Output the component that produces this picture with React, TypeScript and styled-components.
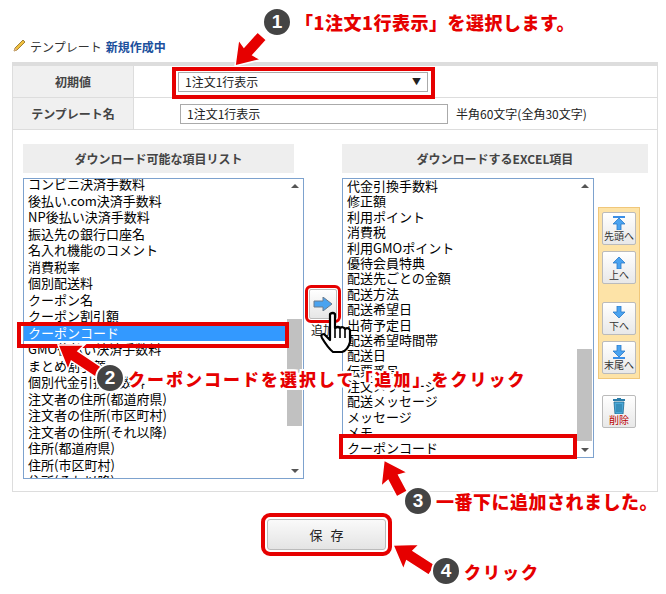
import React from 'react';
import styled, { createGlobalStyle } from 'styled-components';

const Global = createGlobalStyle`
  body { margin: 0; background: #fff; font-family: "Noto Sans CJK JP", "Noto Sans", sans-serif; }
`;

const Page = styled.div`
  position: relative;
  width: 666px;
  height: 594px;
  padding: 36px 8px 0 12px;
  box-sizing: border-box;
  color: #222;
`;

const Heading = styled.div`
  display: flex;
  align-items: center;
  gap: 4px;
  font-size: 12px;
  height: 20px;
  color: #333;
  b { color: #1a4f9c; font-weight: bold; }
`;

const Panel = styled.div`
  margin-top: 6px;
  border-top: 4px solid #ddd;
  border-left: 1px solid #ddd;
  border-right: 1px solid #ddd;
  border-bottom: 1px solid #ddd;
  width: 646px;
  box-sizing: border-box;
`;

const Row = styled.div`
  display: flex;
  height: 31px;
  border-bottom: 1px solid #ddd;
`;

const Label = styled.div`
  width: 120px;
  background: #f0f0f0;
  border-right: 1px solid #ddd;
  display: flex;
  align-items: center;
  justify-content: center;
  font-size: 12px;
  font-weight: bold;
  color: #444;
`;

const Cell = styled.div`
  display: flex;
  align-items: center;
  padding-left: 40px;
  gap: 8px;
  font-size: 12px;
`;

const SelectBox = styled.div`
  position: relative;
  width: 250px;
  height: 20px;
  border: 1px solid #aaa;
  font-size: 12px;
  display: flex;
  align-items: center;
  justify-content: space-between;
  padding: 0 6px;
  box-sizing: border-box;
  background: #fff;
`;

const InputBox = styled.div`
  width: 268px;
  height: 20px;
  margin-left: 6px;
  border: 1px solid #aaa;
  font-size: 12px;
  display: flex;
  align-items: center;
  padding: 0 6px;
  box-sizing: border-box;
`;

const ListArea = styled.div`
  display: flex;
  padding: 14px 0 12px 10px;
`;

const Column = styled.div<{ $w: number }>`
  width: ${p => p.$w}px;
  display: flex;
  flex-direction: column;
`;

const ColHead = styled.div`
  height: 29px;
  background: #eee;
  display: flex;
  align-items: center;
  justify-content: center;
  font-size: 12px;
  font-weight: bold;
  color: #444;
  margin-bottom: 5px;
`;

const ListBox = styled.div<{ $w: number; $h: number }>`
  position: relative;
  width: ${p => p.$w}px;
  height: ${p => p.$h}px;
  border: 1px solid #7da2ce;
  overflow: hidden;
  box-sizing: border-box;
  background: #fff;
`;

const Items = styled.div<{ $mt: number }>`
  margin-top: ${p => p.$mt}px;
  padding-right: 17px;
`;

const Item = styled.div<{ $sel?: boolean; $lh: number }>`
  height: ${p => p.$lh}px;
  line-height: ${p => p.$lh}px;
  font-size: 13px;
  padding-left: 4px;
  white-space: nowrap;
  background: ${p => (p.$sel ? '#3399ff' : 'transparent')};
  color: ${p => (p.$sel ? '#fff' : '#000')};
`;

const Scroll = styled.div<{ $top: number; $h: number }>`
  position: absolute;
  right: 0;
  top: 0;
  bottom: 0;
  width: 17px;
  background: #fff;
  &::after {
    content: '';
    position: absolute;
    left: 1px;
    right: 1px;
    top: ${p => p.$top}px;
    height: ${p => p.$h}px;
    background: #c1c1c1;
  }
`;

const Tri = styled.span<{ $up?: boolean }>`
  position: absolute;
  left: 5px;
  ${p => (p.$up ? 'top: 5px;' : 'bottom: 5px;')}
  width: 0;
  height: 0;
  border-left: 4px solid transparent;
  border-right: 4px solid transparent;
  ${p => (p.$up ? 'border-bottom: 4px solid #555;' : 'border-top: 4px solid #555;')}
`;

const Middle = styled.div`
  width: 38px;
  display: flex;
  flex-direction: column;
  align-items: center;
  padding-top: 145px;
  font-size: 12px;
  gap: 2px;
`;

const ArrowBtn = styled.div`
  width: 26px;
  height: 28px;
  border: 1px solid #bbb;
  border-radius: 2px;
  background: linear-gradient(#fff, #e6e6e6);
  display: flex;
  align-items: center;
  justify-content: center;
  outline: 3px solid #e60000;
  outline-offset: 1px;
`;

const RightBody = styled.div`
  display: flex;
  gap: 4px;
`;

const SideCol = styled.div`
  display: flex;
  flex-direction: column;
  align-items: center;
  padding-top: 29px;
  gap: 16px;
`;

const MoveBox = styled.div`
  width: 42px;
  background: #fde3a7;
  border: 1px solid #f0c77a;
  box-sizing: border-box;
  padding: 4px 3px;
  display: flex;
  flex-direction: column;
  gap: 6px;
`;

const SideBtn = styled.div<{ $gapTop?: number; $red?: boolean }>`
  width: 34px;
  height: 33px;
  margin-top: ${p => p.$gapTop || 0}px;
  border: 1px solid #bbb;
  border-radius: 2px;
  background: linear-gradient(#fff, #e8e8e8);
  box-sizing: border-box;
  display: flex;
  flex-direction: column;
  align-items: center;
  justify-content: center;
  font-size: 10px;
  line-height: 11px;
  color: ${p => (p.$red ? '#b00' : '#333')};
`;

const Footer = styled.div`
  display: flex;
  padding: 27px 0 0 255px;
`;

const SaveBtn = styled.div`
  width: 119px;
  height: 31px;
  border: 1px solid #bbb;
  border-radius: 3px;
  background: linear-gradient(#fafafa, #e4e4e4);
  display: flex;
  align-items: center;
  justify-content: center;
  font-size: 13px;
  letter-spacing: 8px;
  padding-left: 8px;
  box-sizing: border-box;
  outline: 4px solid #e60000;
  outline-offset: 2px;
`;

const RedFrame = styled.div<{ $x: number; $y: number; $w: number; $h: number }>`
  position: absolute;
  left: ${p => p.$x}px;
  top: ${p => p.$y}px;
  width: ${p => p.$w}px;
  height: ${p => p.$h}px;
  border: 4px solid #e60000;
  box-sizing: border-box;
  pointer-events: none;
`;

const Note = styled.div<{ $x: number; $y: number; $size?: number; $ls?: number }>`
  position: absolute;
  left: ${p => p.$x}px;
  top: ${p => p.$y}px;
  display: flex;
  align-items: center;
  gap: 3px;
  font-size: ${p => p.$size || 17}px;
  letter-spacing: ${p => p.$ls || 0}px;
  font-weight: 900;
  color: #e60000;
  white-space: nowrap;
  text-shadow: -2px 0 #fff, 2px 0 #fff, 0 -2px #fff, 0 2px #fff, 2px 2px #fff, -2px -2px #fff, 2px -2px #fff, -2px 2px #fff;
`;

const Badge = styled.span`
  width: 26px;
  height: 26px;
  border-radius: 50%;
  background: #444;
  border: 2px solid #fff;
  color: #fff;
  font-family: "Liberation Sans", sans-serif;
  font-size: 19px;
  font-weight: bold;
  letter-spacing: 0;
  display: inline-flex;
  align-items: center;
  justify-content: center;
  text-shadow: none;
  flex-shrink: 0;
`;

const Overlay = styled.svg`
  position: absolute;
  left: 0;
  top: 0;
  pointer-events: none;
`;

const leftItems = [
  'コンビニ決済手数料', '後払い.com決済手数料', 'NP後払い決済手数料', '振込先の銀行口座名',
  '名入れ機能のコメント', '消費税率', '個別配送料', 'クーポン名', 'クーポン割引額', 'クーポンコード',
  'GMO後払い決済手数料', 'まとめ割引額', '個別代金引換手数料', '注文者の住所(都道府県)',
  '注文者の住所(市区町村)', '注文者の住所(それ以降)', '住所(都道府県)', '住所(市区町村)', '住所(それ以降)',
];

const rightItems = [
  '代金引換手数料', '修正額', '利用ポイント', '消費税', '利用GMOポイント', '優待会員特典',
  '配送先ごとの金額', '配送方法', '配送希望日', '出荷予定日', '配送希望時間帯', '配送日',
  '伝票番号', '注文メッセージ', '配送メッセージ', 'メッセージ', 'メモ', 'クーポンコード',
];

const BlueArrow = ({ dir }: { dir: 'top' | 'up' | 'down' | 'bottom' }) => {
  const down = dir === 'down' || dir === 'bottom';
  const bar = dir === 'top' || dir === 'bottom';
  return (
    <svg width="16" height="14" viewBox="0 0 16 14">
      <g transform={down ? 'rotate(180 8 7)' : undefined}>
        {bar && <rect x="2" y="0" width="12" height="2" fill="#3a8ee6" />}
        <path d="M8 2 L14 8 L10 8 L10 14 L6 14 L6 8 L2 8 Z" fill="#4aa3f0" stroke="#2a78c8" strokeWidth="0.8" />
      </g>
    </svg>
  );
};

const Arrow = ({ x1, y1, x2, y2 }: { x1: number; y1: number; x2: number; y2: number }) => {
  const a = Math.atan2(y2 - y1, x2 - x1);
  const len = Math.hypot(x2 - x1, y2 - y1);
  const deg = (a * 180) / Math.PI;
  return (
    <g transform={`translate(${x1} ${y1}) rotate(${deg})`}>
      <path
        d={`M0 -6 L${len - 20} -6 L${len - 22} -15 L${len} 0 L${len - 22} 15 L${len - 20} 6 L0 6 Z`}
        fill="#e60000"
        stroke="#fff"
        strokeWidth="1.5"
      />
    </g>
  );
};

export default function App() {
  return (
    <Page>
      <Global />
      <Heading>
        <svg width="14" height="14" viewBox="0 0 14 14">
          <path d="M2 12 L3 9 L11 1 L13 3 L5 11 Z" fill="#f0c040" stroke="#8a6a20" strokeWidth="0.8" />
          <path d="M2 12 L3 9 L5 11 Z" fill="#e8b890" />
        </svg>
        テンプレート <b>新規作成中</b>
      </Heading>
      <Panel>
        <Row>
          <Label>初期値</Label>
          <Cell style={{ paddingLeft: 44 }}>
            <SelectBox>
              1注文1行表示 <span style={{ fontSize: 9 }}>▼</span>
            </SelectBox>
          </Cell>
        </Row>
        <Row>
          <Label>テンプレート名</Label>
          <Cell>
            <InputBox>1注文1行表示</InputBox>
            <span>半角60文字(全角30文字)</span>
          </Cell>
        </Row>
        <ListArea>
          <Column $w={281}>
            <ColHead style={{ width: 271 }}>ダウンロード可能な項目リスト</ColHead>
            <ListBox $w={281} $h={301}>
              <Items $mt={-3}>
                {leftItems.map(t => (
                  <Item key={t} $lh={16.5} $sel={t === 'クーポンコード'}>{t}</Item>
                ))}
              </Items>
              <Scroll $top={140} $h={107}>
                <Tri $up />
                <Tri />
              </Scroll>
            </ListBox>
          </Column>
          <Middle>
            <ArrowBtn>
              <svg width="20" height="14" viewBox="0 0 20 14">
                <path d="M1 4 L10 4 L10 0 L19 7 L10 14 L10 10 L1 10 Z" fill="#4aa3f0" stroke="#6b7b8c" strokeWidth="1" />
              </svg>
            </ArrowBtn>
            <span>追加</span>
          </Middle>
          <Column $w={306}>
            <ColHead>ダウンロードするEXCEL項目</ColHead>
            <RightBody>
              <ListBox $w={252} $h={280}>
                <Items $mt={-1}>
                  {rightItems.map(t => (
                    <Item key={t} $lh={15.4}>{t}</Item>
                  ))}
                </Items>
                <Scroll $top={170} $h={92}>
                  <Tri $up />
                  <Tri />
                </Scroll>
              </ListBox>
              <SideCol>
                <MoveBox>
                  <SideBtn><BlueArrow dir="top" />先頭へ</SideBtn>
                  <SideBtn><BlueArrow dir="up" />上へ</SideBtn>
                  <SideBtn $gapTop={12}><BlueArrow dir="down" />下へ</SideBtn>
                  <SideBtn><BlueArrow dir="bottom" />末尾へ</SideBtn>
                </MoveBox>
                <SideBtn $red>
                  <svg width="14" height="16" viewBox="0 0 14 16">
                    <rect x="1" y="1" width="12" height="2" fill="#2a7ca8" />
                    <rect x="5" y="0" width="4" height="1.5" fill="#2a7ca8" />
                    <path d="M2 4 L12 4 L11 16 L3 16 Z" fill="#4aa8d8" stroke="#1f6a90" strokeWidth="0.8" />
                    <path d="M5 6 V14 M7 6 V14 M9 6 V14" stroke="#1f6a90" strokeWidth="0.8" />
                  </svg>
                  削除
                </SideBtn>
              </SideCol>
            </RightBody>
          </Column>
        </ListArea>
      </Panel>
      <Footer>
        <SaveBtn>保存</SaveBtn>
      </Footer>

      <RedFrame $x={172} $y={67} $w={263} $h={32} />
      <RedFrame $x={17} $y={322} $w={272} $h={26} />
      <RedFrame $x={339} $y={434} $w={238} $h={25} />

      <Overlay width="666" height="594">
        <Arrow x1={262} y1={36} x2={235} y2={66} />
        <Arrow x1={100} y1={373} x2={58} y2={345} />
        <Arrow x1={402} y1={494} x2={384} y2={460} />
        <Arrow x1={432} y1={570} x2={393} y2={545} />
        <g transform="translate(320 312)">
          <path
            d="M10 2 Q13 0 15 2 L15 16 Q18 14 20 16 Q23 14 25 17 Q28 15 30 18 L30 30 Q28 38 22 40 L13 40 Q8 36 2 26 Q0 22 4 22 L10 28 Z"
            fill="#fff"
            stroke="#000"
            strokeWidth="2.2"
            strokeLinejoin="round"
          />
          <path d="M15 16 V26 M20 16 V26 M25 17 V26" stroke="#000" strokeWidth="1.6" />
        </g>
      </Overlay>

      <Note $x={262} $y={7} $size={18} $ls={0.5}><Badge>1</Badge>「1注文1行表示」を選択します。</Note>
      <Note $x={95} $y={363} $ls={2}><Badge>2</Badge>クーポンコードを選択して「追加」をクリック</Note>
      <Note $x={403} $y={486} $size={18} $ls={0.5}><Badge>3</Badge>一番下に追加されました。</Note>
      <Note $x={431} $y={556} $ls={2}><Badge>4</Badge>クリック</Note>
    </Page>
  );
}
